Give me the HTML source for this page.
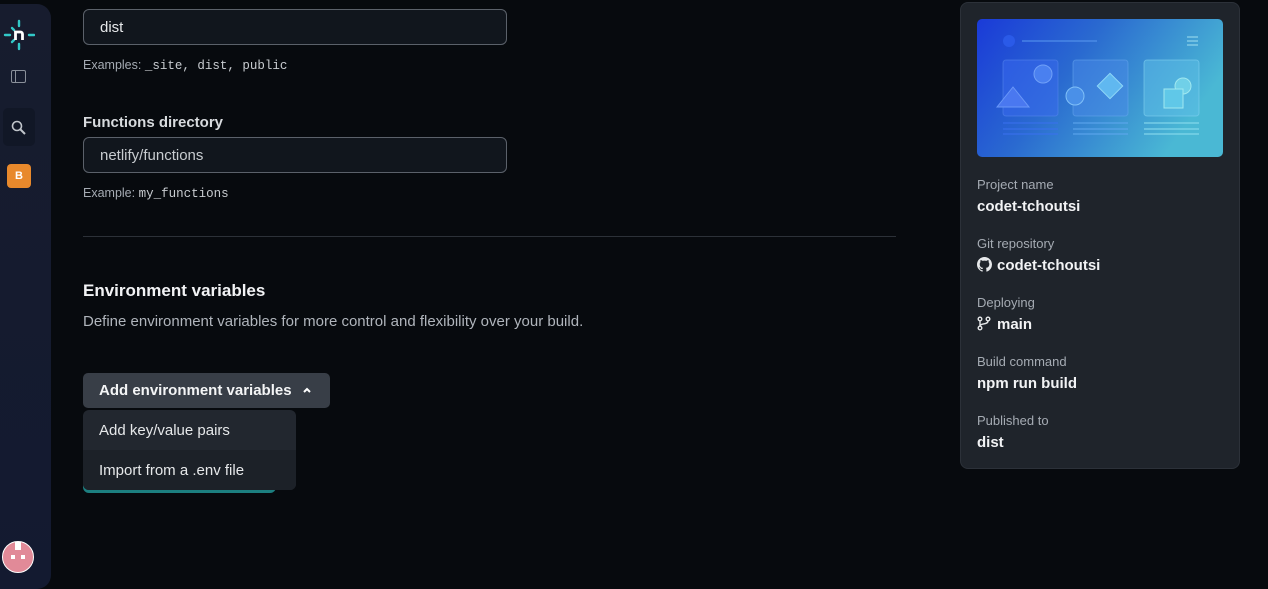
<!DOCTYPE html>
<html><head><style>
*{box-sizing:border-box;margin:0;padding:0}
body{width:1268px;height:589px;background:#070a0e;font-family:"Liberation Sans",sans-serif;color:#e6e8ea;position:relative;overflow:hidden}
.side{position:absolute;left:0;top:4px;width:51px;height:585px;background:linear-gradient(180deg,#171c2e,#131a30);border-radius:0 14px 14px 0}
.abs{position:absolute}
.inp{position:absolute;left:83px;width:424px;height:36px;border:1px solid #5b616a;border-radius:6px;background:#11161d;padding-left:16px;line-height:36px;font-size:15px}
.hint{position:absolute;left:83px;font-size:12.5px;color:#a5abb3}
.mono{font-family:"Liberation Mono",monospace;font-size:12.5px;color:#c8ccd0}
.lbl{font-size:13px;color:#a5abb3}
.val{font-size:15px;font-weight:bold;color:#f2f3f5}
</style></head><body>
<div class="side">
 <svg class="abs" style="left:3px;top:15px" width="32" height="32" viewBox="0 0 32 32">
  <g stroke="#32c8c8" stroke-width="2.4" stroke-linecap="round"><line x1="16" y1="2" x2="16" y2="7"/><line x1="16" y1="25" x2="16" y2="30"/><line x1="2" y1="16" x2="7" y2="16"/><line x1="26" y1="16" x2="31" y2="16"/><line x1="9" y1="9" x2="11" y2="11"/><line x1="9" y1="23" x2="11" y2="21"/></g>
  <path d="M12.5 21V13h5a2 2 0 0 1 2 2v6" stroke="#fff" stroke-width="2.8" fill="none"/>
 </svg>
 <div class="abs" style="left:11px;top:66px;width:15px;height:13px;border:1.5px solid #8a909a;border-radius:2px"><div style="position:absolute;left:3px;top:0;bottom:0;border-left:1.5px solid #8a909a"></div></div>
 <div class="abs" style="left:3px;top:104px;width:32px;height:38px;background:#111726;border-radius:5px"></div>
 <svg class="abs" style="left:11px;top:116px" width="16" height="16" viewBox="0 0 16 16"><circle cx="6" cy="6" r="4.5" stroke="#c0c4ca" stroke-width="1.6" fill="none"/><line x1="9.5" y1="9.5" x2="14" y2="14" stroke="#c0c4ca" stroke-width="2"/></svg>
 <div class="abs" style="left:7px;top:160px;width:24px;height:24px;background:#e8892c;border-radius:4px;color:#fff;font-size:11px;font-weight:bold;text-align:center;line-height:24px">B</div>
 <div class="abs" style="left:2px;top:537px;width:32px;height:32px;border-radius:50%;background:#e18a98;border:1px solid #fff"></div>
 <div class="abs" style="left:15px;top:538px;width:6px;height:8px;background:#fff"></div>
 <div class="abs" style="left:11px;top:551px;width:4px;height:4px;background:#fff"></div>
 <div class="abs" style="left:21px;top:551px;width:4px;height:4px;background:#fff"></div>
</div>

<div class="inp" style="top:9px">dist</div>
<div class="hint" style="top:58px">Examples: <span class="mono">_site, dist, public</span></div>
<div class="abs" style="left:83px;top:114px;font-size:15px;font-weight:bold;color:#d8dbde">Functions directory</div>
<div class="inp" style="top:137px;color:#c8ccd0">netlify/functions</div>
<div class="hint" style="top:186px">Example: <span class="mono">my_functions</span></div>
<div class="abs" style="left:83px;top:236px;width:813px;border-top:1px solid #2c3138"></div>
<div class="abs" style="left:83px;top:281px;font-size:17px;font-weight:bold;color:#f2f3f5">Environment variables</div>
<div class="abs" style="left:83px;top:313px;font-size:15px;color:#b0b5bc">Define environment variables for more control and flexibility over your build.</div>

<div class="abs" style="left:83px;top:470px;width:193px;height:23px;background:#1c7f80;border-radius:6px"></div>
<div class="abs" style="left:83px;top:373px;width:247px;height:35px;background:#383e47;border-radius:5px;padding-left:16px;line-height:36px;font-size:15px;font-weight:bold;color:#f4f5f6">Add environment variables <svg width="10" height="8" viewBox="0 0 10 8" style="margin-left:6px;vertical-align:1px"><path d="M2 6L5 3L8 6" stroke="#fff" stroke-width="2" fill="none"/></svg></div>
<div class="abs" style="left:83px;top:410px;width:213px;height:80px;background:#22272f;border-radius:6px;overflow:hidden;font-size:15px;color:#e6e8ea">
 <div style="height:40px;line-height:41px;padding-left:16px">Add key/value pairs</div>
 <div style="height:40px;line-height:41px;padding-left:16px;background:#1c2128">Import from a .env file</div>
</div>

<div class="abs" style="left:960px;top:2px;width:280px;height:467px;background:#1f242b;border:1px solid #2c3139;border-radius:8px"></div>
<svg class="abs" style="left:977px;top:19px" width="246" height="138" viewBox="0 0 246 138">
 <defs><linearGradient id="g" x1="0" y1="0" x2="1" y2="0.4"><stop offset="0" stop-color="#1a3ad8"/><stop offset="0.45" stop-color="#2a6ad0"/><stop offset="1" stop-color="#4ab8d4"/></linearGradient></defs>
 <rect width="246" height="138" rx="5" fill="url(#g)"/>
 <circle cx="32" cy="22" r="6" fill="#2a5ae8"/><line x1="45" y1="22" x2="120" y2="22" stroke="#5a9af0"/>
 <g stroke="#a0e0f0"><line x1="210" y1="18" x2="221" y2="18"/><line x1="210" y1="22" x2="221" y2="22"/><line x1="210" y1="26" x2="221" y2="26"/></g>
 <rect x="26" y="41" width="55" height="56" rx="3" fill="#3a6af0" fill-opacity="0.5" stroke="#5a8af0" stroke-opacity=".5"/>
 <rect x="96" y="41" width="55" height="56" rx="3" fill="#4a8ae8" fill-opacity="0.5" stroke="#6aaaf0" stroke-opacity=".5"/>
 <rect x="167" y="41" width="55" height="56" rx="3" fill="#60c0e8" fill-opacity="0.5" stroke="#80d0f0" stroke-opacity=".6"/>
 <circle cx="66" cy="55" r="9" fill="#4a80f0" stroke="#70a0f8"/><path d="M20 88L36 68L52 88Z" fill="#4a78f0" stroke="#6a98f8"/>
 <circle cx="98" cy="77" r="9" fill="#4a90e8" stroke="#80c0f8"/><rect x="124" y="58" width="18" height="18" transform="rotate(45 133 67)" fill="#60b8f0" stroke="#90d8f8"/>
 <circle cx="206" cy="67" r="8" fill="#70d0e8" stroke="#a0e8f0"/><rect x="187" y="70" width="19" height="19" fill="#60c8e8" stroke="#a0e8f0"/>
 <g stroke-width="1"><line x1="26" y1="104" x2="81" y2="104" stroke="#3a70f0"/><line x1="26" y1="110" x2="81" y2="110" stroke="#3a70f0"/><line x1="26" y1="115" x2="81" y2="115" stroke="#3a70f0"/>
 <line x1="96" y1="104" x2="151" y2="104" stroke="#60a8f0"/><line x1="96" y1="110" x2="151" y2="110" stroke="#60a8f0"/><line x1="96" y1="115" x2="151" y2="115" stroke="#60a8f0"/>
 <line x1="167" y1="104" x2="222" y2="104" stroke="#90e0f0"/><line x1="167" y1="110" x2="222" y2="110" stroke="#90e0f0"/><line x1="167" y1="115" x2="222" y2="115" stroke="#90e0f0"/></g>
</svg>
<div class="abs lbl" style="left:977px;top:177px">Project name</div>
<div class="abs val" style="left:977px;top:198px">codet-tchoutsi</div>
<div class="abs lbl" style="left:977px;top:236px">Git repository</div>
<div class="abs val" style="left:977px;top:257px"><svg width="15" height="15" viewBox="0 0 16 16" style="vertical-align:-2px;margin-right:5px"><path fill="#e6e8ea" d="M8 0C3.58 0 0 3.58 0 8c0 3.54 2.29 6.53 5.47 7.59.4.07.55-.17.55-.38v-1.33c-2.23.49-2.7-1.07-2.7-1.07-.36-.92-.89-1.17-.89-1.17-.73-.5.06-.49.06-.49.8.06 1.23.83 1.23.83.72 1.23 1.87.87 2.33.67.07-.52.28-.87.51-1.07-1.78-.2-3.64-.89-3.64-3.95 0-.87.31-1.59.82-2.15-.08-.2-.36-1.02.08-2.12 0 0 .67-.21 2.2.82a7.6 7.6 0 0 1 4 0c1.53-1.04 2.2-.82 2.2-.82.44 1.1.16 1.92.08 2.12.51.56.82 1.27.82 2.15 0 3.07-1.87 3.75-3.65 3.95.29.25.54.73.54 1.48v2.2c0 .21.15.46.55.38A8 8 0 0 0 16 8c0-4.42-3.58-8-8-8z"/></svg>codet-tchoutsi</div>
<div class="abs lbl" style="left:977px;top:295px">Deploying</div>
<div class="abs val" style="left:977px;top:316px"><svg width="14" height="15" viewBox="0 0 14 15" style="vertical-align:-2px;margin-right:6px"><g stroke="#e6e8ea" stroke-width="1.4" fill="none"><circle cx="3" cy="3" r="1.8"/><circle cx="3" cy="12" r="1.8"/><circle cx="11" cy="3" r="1.8"/><path d="M3 5v5M11 5c0 4-8 2-8 5"/></g></svg>main</div>
<div class="abs lbl" style="left:977px;top:354px">Build command</div>
<div class="abs val" style="left:977px;top:375px">npm run build</div>
<div class="abs lbl" style="left:977px;top:413px">Published to</div>
<div class="abs val" style="left:977px;top:434px">dist</div>
</body></html>
